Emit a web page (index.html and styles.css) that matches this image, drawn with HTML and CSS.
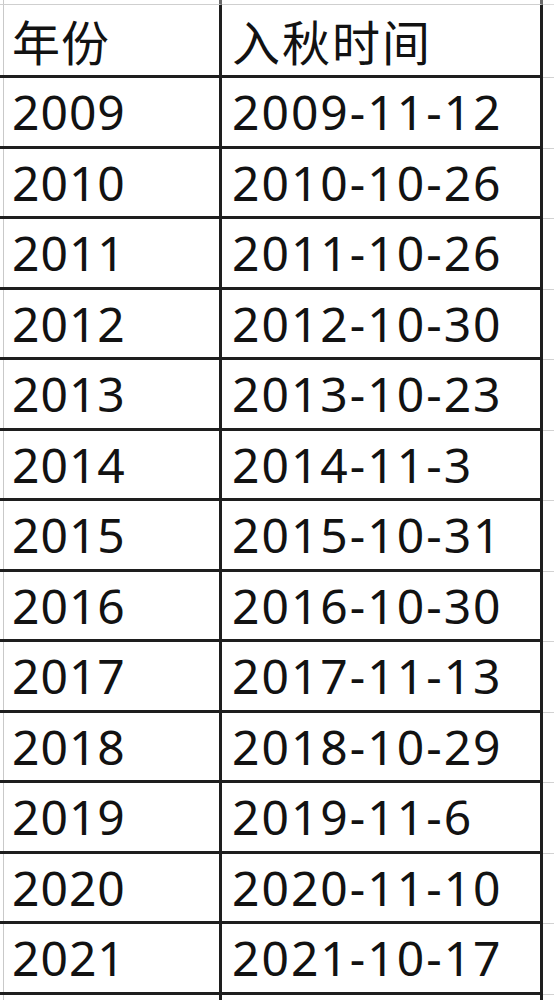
FILE: index.html
```html
<!DOCTYPE html>
<html lang="zh-CN">
<head>
<meta charset="utf-8">
<title>入秋时间</title>
<link rel="stylesheet" href="styles.css">
</head>
<body>
<div class="sheet">
  <div class="row stub-top">
    <div class="cell c1"></div><div class="cell c2"></div><div class="cell tail"></div>
  </div>
  <div class="row head">
    <div class="cell c1">年份</div><div class="cell c2">入秋时间</div><div class="cell tail"></div>
  </div>
  <div class="row"><div class="cell c1">2009</div><div class="cell c2">2009-11-12</div><div class="cell tail"></div></div>
  <div class="row"><div class="cell c1">2010</div><div class="cell c2">2010-10-26</div><div class="cell tail"></div></div>
  <div class="row"><div class="cell c1">2011</div><div class="cell c2">2011-10-26</div><div class="cell tail"></div></div>
  <div class="row"><div class="cell c1">2012</div><div class="cell c2">2012-10-30</div><div class="cell tail"></div></div>
  <div class="row"><div class="cell c1">2013</div><div class="cell c2">2013-10-23</div><div class="cell tail"></div></div>
  <div class="row"><div class="cell c1">2014</div><div class="cell c2">2014-11-3</div><div class="cell tail"></div></div>
  <div class="row"><div class="cell c1">2015</div><div class="cell c2">2015-10-31</div><div class="cell tail"></div></div>
  <div class="row"><div class="cell c1">2016</div><div class="cell c2">2016-10-30</div><div class="cell tail"></div></div>
  <div class="row"><div class="cell c1">2017</div><div class="cell c2">2017-11-13</div><div class="cell tail"></div></div>
  <div class="row"><div class="cell c1">2018</div><div class="cell c2">2018-10-29</div><div class="cell tail"></div></div>
  <div class="row"><div class="cell c1">2019</div><div class="cell c2">2019-11-6</div><div class="cell tail"></div></div>
  <div class="row"><div class="cell c1">2020</div><div class="cell c2">2020-11-10</div><div class="cell tail"></div></div>
  <div class="row"><div class="cell c1">2021</div><div class="cell c2">2021-10-17</div><div class="cell tail"></div></div>
  <div class="row stub-bottom">
    <div class="cell c1"></div><div class="cell c2"></div><div class="cell tail"></div>
  </div>
</div>
</body>
</html>
```

FILE: styles.css
```css
html, body {
  margin: 0;
  padding: 0;
  background: #ffffff;
}

.sheet {
  width: 554px;
  height: 1000px;
  overflow: hidden;
  background: linear-gradient(to right, transparent 3px, #c9c9c9 3px, #c9c9c9 4px, transparent 4px);
  font-family: "Noto Sans", "Noto Sans CJK SC", sans-serif;
  font-size: 48px;
  color: #121212;
  letter-spacing: 1px;
}

.row {
  display: flex;
  height: 70.5px;
}

.cell {
  box-sizing: border-box;
  height: 100%;
  display: flex;
  align-items: center;
  border-bottom: 3px solid #1e1e1e;
  white-space: nowrap;
}

.c1 {
  width: 222px;
  padding-left: 12px;
  border-right: 3px solid #1e1e1e;
}

.c2 {
  width: 321px;
  padding-left: 10px;
  border-right: 3px solid #1e1e1e;
  letter-spacing: 2px;
}

.tail {
  flex: 1;
  border-bottom: 1px solid #d2d2d2;
}

.stub-top {
  height: 4px;
}

.stub-top .cell {
  border-bottom: 1px solid #cfcfcf;
  border-right-color: #6a6a6a;
  height: 5px;
}

.stub-top .tail {
  border-bottom: 1px solid #dddddd;
}

.head {
  height: 73px;
  margin-top: 1px;
}

.stub-bottom .cell {
  border-bottom: none;
}
```
